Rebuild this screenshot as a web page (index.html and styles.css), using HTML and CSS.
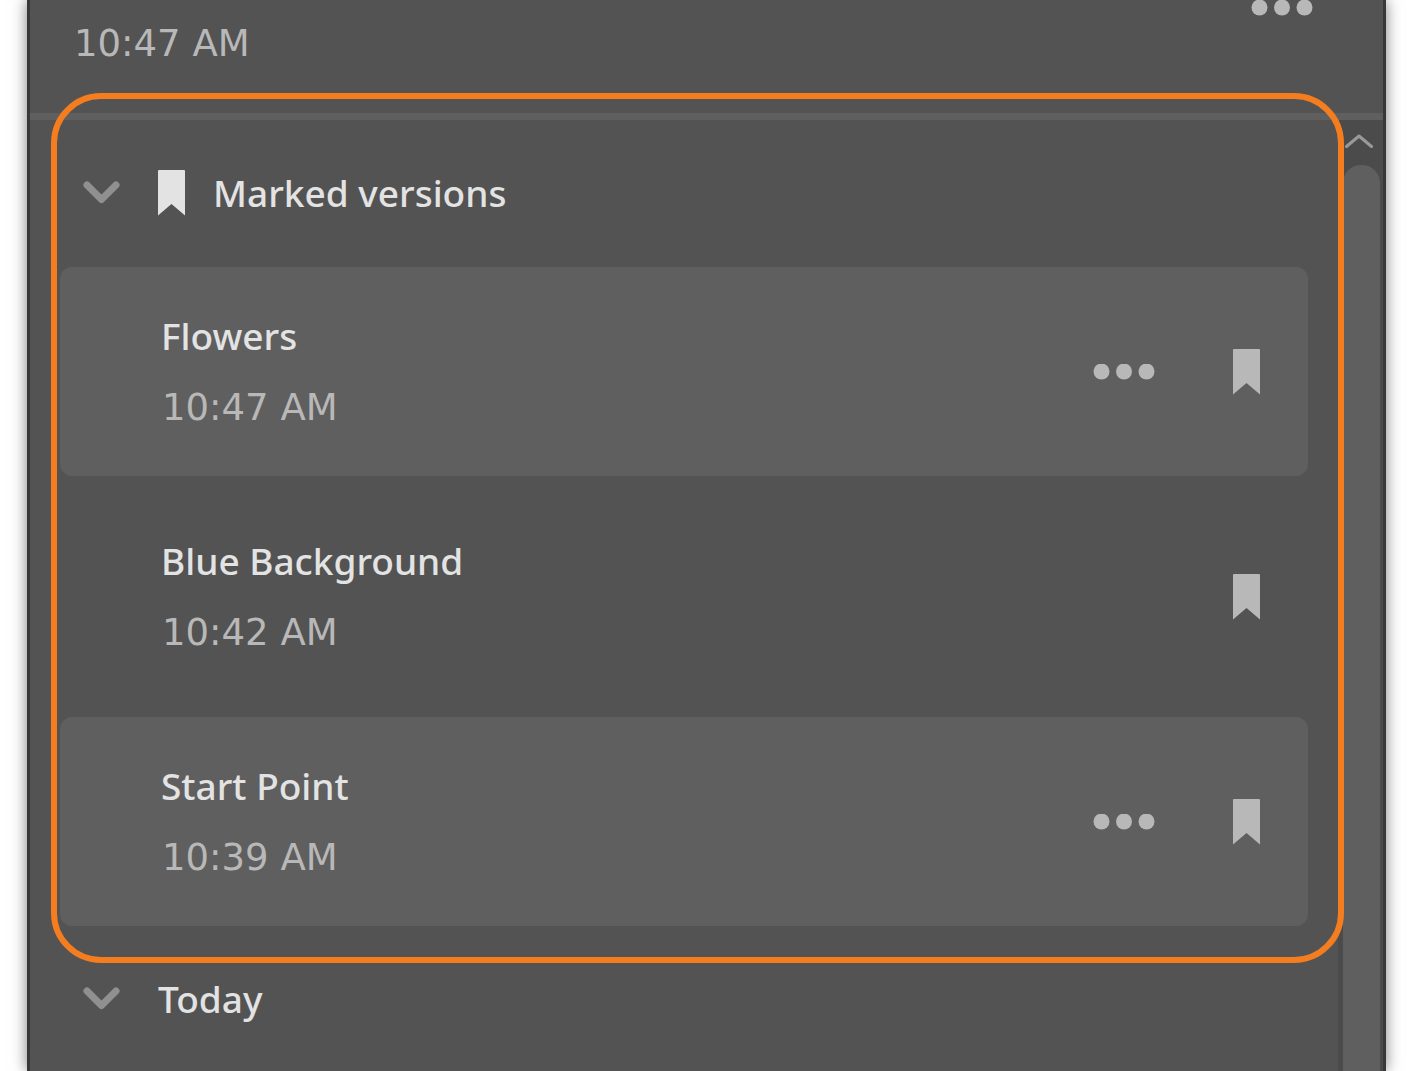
FILE: index.html
```html
<!DOCTYPE html>
<html lang="en">
<head>
<meta charset="utf-8">
<title>Version History</title>
<link rel="stylesheet" href="styles.css">
</head>
<body>
<svg class="symbols" aria-hidden="true">
  <symbol id="dots" viewBox="0 0 62 16"><circle cx="8.500" cy="7.500" r="8"/><circle cx="31" cy="7.500" r="8"/><circle cx="53.500" cy="7.500" r="8"/></symbol>
  <symbol id="bookmark" viewBox="0 0 27 46"><path d="M1 0H26Q27 0 27 1V45.500L13.500 34L0 45.500V1Q0 0 1 0Z"/></symbol>
  <symbol id="chevron" viewBox="0 0 38 24"><path d="M4 4L18.500 18.500L33 4" fill="none" stroke="currentColor" stroke-width="7" stroke-linecap="round" stroke-linejoin="round"/></symbol>
</svg>
<main class="panel">
  <header class="current">
    <time class="time" datetime="10:47">10:47 AM</time>
    <button class="icon-button" type="button" aria-label="More options"><svg class="dots"><use href="#dots"/></svg></button>
  </header>
  <div class="content">
    <div class="versions">
      <section class="marked">
        <h2 class="group">
          <button class="group-toggle" type="button" aria-expanded="true">
            <svg class="chevron"><use href="#chevron"/></svg>
            <svg class="bookmark"><use href="#bookmark"/></svg>
            <span>Marked versions</span>
          </button>
        </h2>
        <ul class="list">
          <li class="row row-active">
            <div class="info"><span class="title">Flowers</span><time class="time" datetime="10:47">10:47 AM</time></div>
            <button class="icon-button" type="button" aria-label="More options"><svg class="dots"><use href="#dots"/></svg></button>
            <button class="icon-button" type="button" aria-label="Unmark version"><svg class="bookmark"><use href="#bookmark"/></svg></button>
          </li>
          <li class="row">
            <div class="info"><span class="title">Blue Background</span><time class="time" datetime="10:42">10:42 AM</time></div>
            <button class="icon-button" type="button" aria-label="Unmark version"><svg class="bookmark"><use href="#bookmark"/></svg></button>
          </li>
          <li class="row row-active">
            <div class="info"><span class="title">Start Point</span><time class="time" datetime="10:39">10:39 AM</time></div>
            <button class="icon-button" type="button" aria-label="More options"><svg class="dots"><use href="#dots"/></svg></button>
            <button class="icon-button" type="button" aria-label="Unmark version"><svg class="bookmark"><use href="#bookmark"/></svg></button>
          </li>
        </ul>
        <div class="highlight"></div>
      </section>
      <section>
        <h2 class="group">
          <button class="group-toggle" type="button" aria-expanded="true">
            <svg class="chevron"><use href="#chevron"/></svg>
            <span>Today</span>
          </button>
        </h2>
      </section>
    </div>
    <div class="scrollbar">
      <button class="scroll-up" type="button" aria-label="Scroll up"><svg class="arrow" viewBox="0 0 28 16"><path d="M1.500 13.500L14 3L26.500 13.500"/></svg></button>
      <div class="thumb"></div>
    </div>
  </div>
</main>
</body>
</html>
```
FILE: styles.css
```css
* {
  box-sizing: border-box;
}

body {
  margin: 0;
  padding: 0 27px;
  background: #fff;
  color: #e3e3e3;
  font: 500 37px/70px "Noto Sans", sans-serif;
  overflow: hidden;
}

.symbols {
  display: none;
}

.panel {
  display: flex;
  flex-direction: column;
  height: 100vh;
  background: #535353;
  border: solid #383838;
  border-width: 0 3px;
  box-shadow: 0 0 14px rgba(0, 0, 0, 0.5);
}

.current {
  display: flex;
  flex: none;
  justify-content: space-between;
  align-items: flex-start;
  height: 120px;
  padding: 0 70px 0 44px;
  border-bottom: 7px solid #5f5f5f;
}

.current .time {
  padding-top: 9px;
}

.time {
  color: #b8b8b8;
  font: 400 37px/70px "DejaVu Sans", sans-serif;
}

button {
  padding: 0;
  border: 0;
  background: none;
  color: inherit;
  font: inherit;
  cursor: pointer;
}

svg {
  display: block;
  fill: currentColor;
}

.icon-button {
  color: #b8b8b8;
}

.dots {
  width: 62px;
  height: 16px;
}

.bookmark {
  width: 27px;
  height: 46px;
}

.chevron {
  width: 38px;
  height: 24px;
  color: #909090;
}

.content {
  display: flex;
  flex: 1;
  min-height: 0;
}

.versions {
  flex: 1;
  min-width: 0;
}

.marked {
  position: relative;
}

.group {
  margin: 0;
  padding-left: 53px;
  font: inherit;
}

.group-toggle {
  display: flex;
  align-items: center;
  height: 146px;
}

.marked .group {
  padding-bottom: 1px;
}

.group-toggle .chevron {
  margin-right: 37px;
}

.group-toggle .bookmark {
  margin-right: 28px;
}

.list {
  display: flex;
  flex-direction: column;
  gap: 16px;
  margin: 0;
  padding: 0 30px;
  list-style: none;
}

.row {
  display: flex;
  align-items: center;
  gap: 78px;
  height: 209px;
  padding: 0 48px 0 101px;
  border-radius: 12px;
}

.row-active {
  background: #5f5f5f;
}

.info {
  display: flex;
  flex: 1;
  flex-direction: column;
  gap: 2px;
}

.info .time {
  padding-left: 1px;
}

.highlight {
  position: absolute;
  z-index: 1;
  inset: -27px -6px -37px 21px;
  border: 6px solid #f47d20;
  border-radius: 50px;
  pointer-events: none;
}

.scrollbar {
  display: flex;
  flex-direction: column;
  width: 45px;
  padding: 0 3px 0 5px;
  background: #4b4b4b;
}

.scroll-up {
  display: flex;
  justify-content: center;
  align-items: center;
  height: 45px;
  padding: 0 6px 4px 0;
}

.arrow {
  width: 28px;
  height: 16px;
  fill: none;
  stroke: #999;
  stroke-width: 3;
  stroke-linecap: round;
  stroke-linejoin: round;
}

.thumb {
  flex: 1;
  background: #5f5f5f;
  border-radius: 18px 18px 0 0;
}
```
